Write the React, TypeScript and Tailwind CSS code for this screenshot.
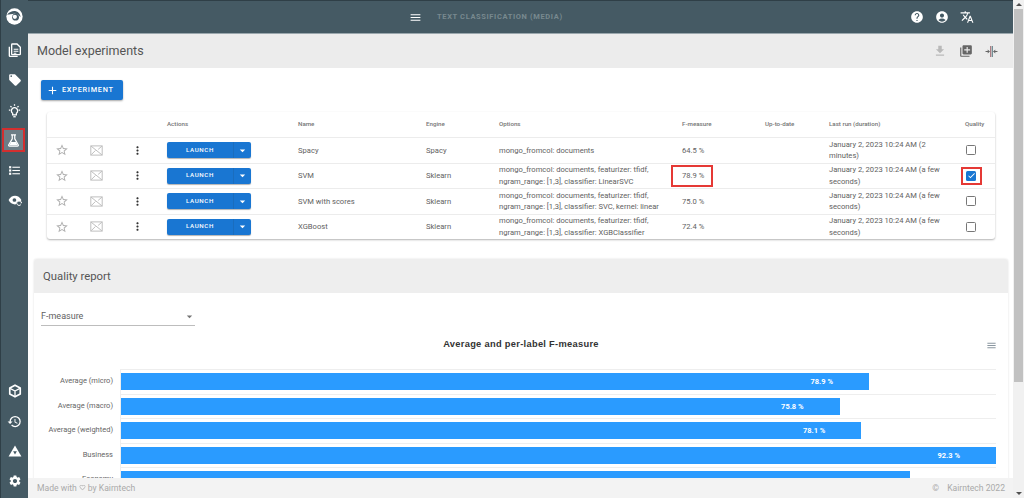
import React from "react";
import {
  MdAdd, MdArrowDropDown, MdMenu, MdHelp, MdAccountCircle, MdTranslate, MdFileDownload, MdLibraryAdd,
  MdStarBorder, MdMoreVert, MdLocalOffer, MdHistory, MdSettings, MdCheck, MdFavoriteBorder,
} from "react-icons/md";

const DocIcon = () => (
  <svg viewBox="0 0 24 24" className="w-[16px] h-[16px]" fill="none" stroke="#fff" strokeWidth="2">
    <path d="M8 3h7l5 5v10a1 1 0 0 1-1 1H8a1 1 0 0 1-1-1V4a1 1 0 0 1 1-1z" />
    <path d="M3.500 7v13.500a1 1 0 0 0 1 1H16" />
    <path d="M10 11h7M10 14h7M10 17h4" strokeWidth="1.600" />
  </svg>
);
const BulbIcon = () => (
  <svg viewBox="0 0 24 24" className="w-[15px] h-[15px]" fill="none" stroke="#fff" strokeWidth="2">
    <path d="M9 16.500a5 5 0 1 1 6 0V19H9z" />
    <path d="M10 22h4" />
    <path d="M12 2v2.500M3 11.500h2.500M18.500 11.500H21M5.500 5l1.800 1.800M18.500 5l-1.800 1.800" />
  </svg>
);
const FlaskIcon = () => (
  <svg viewBox="0 0 24 24" className="w-[15px] h-[15px]" fill="none" stroke="#fff" strokeWidth="2">
    <path d="M8 3h8" />
    <path d="M10 3v6.500L4.300 19.200A1.300 1.300 0 0 0 5.500 21h13a1.300 1.300 0 0 0 1.200-1.800L14 9.500V3" />
    <path d="M8 14.500h8l2.500 5h-13z" fill="#fff" stroke="none" />
  </svg>
);
const ListIcon = () => (
  <svg viewBox="0 0 24 24" className="w-[13px] h-[13px]" fill="#fff">
    <rect x="2" y="4" width="4" height="4" /><rect x="8" y="5" width="14" height="2" />
    <rect x="2" y="10" width="4" height="4" /><rect x="8" y="11" width="14" height="2" />
    <rect x="2" y="16" width="4" height="4" /><rect x="8" y="17" width="14" height="2" />
  </svg>
);
const EyeRefresh = () => (
  <svg viewBox="0 0 24 24" className="w-[14px] h-[14px]" fill="none">
    <path d="M1 12c2.500-5 6.500-7.500 11-7.500S20.500 7 23 12c-.5 1-1 1.700-1.600 2.500H15.500L14 19.300c-.6.1-1.300.2-2 .2-4.500 0-8.500-2.500-11-7.500z" fill="#fff" />
    <circle cx="11" cy="12" r="3.200" fill="#455a64" />
    <path d="M23 16.500a4 4 0 1 0-1 3.500" stroke="#fff" strokeWidth="1.700" />
    <path d="M23.800 14.500v3h-3z" fill="#fff" />
  </svg>
);
const CubeIcon = () => (
  <svg viewBox="0 0 24 24" className="w-[14px] h-[14px]" fill="none" stroke="#fff" strokeLinejoin="round">
    <path d="M12 2l9 5v10l-9 5-9-5V7z" strokeWidth="2.800" />
    <path d="M3.500 7.500L12 12l8.500-4.500M12 12v9.500" strokeWidth="2.200" />
  </svg>
);
const TriIcon = () => (
  <svg viewBox="0 0 24 24" className="w-[14px] h-[14px]">
    <path d="M12 2.500L23 21.500H1z" fill="#fff" />
    <path d="M8.800 12.500h6.400L12 18z" fill="#455a64" />
  </svg>
);
const Logo = () => (
  <svg viewBox="0 0 24 24" className="w-[17px] h-[17px]">
    <circle cx="12" cy="12" r="11.500" fill="#fff" />
    <path d="M1.500 9.500C5 5 10 3.500 14 4.500c4 1 6.500 4.500 6.500 8.500-2.500-3.500-5.500-5-9-4.800-3.500.2-6.500 1-10 1.300z" fill="#455a64" />
    <circle cx="13.500" cy="13" r="4.800" fill="#455a64" />
    <circle cx="12.500" cy="12.500" r="3" fill="#fff" />
  </svg>
);
const SplitIcon = () => (
  <svg viewBox="0 0 24 24" className="w-[13px] h-[13px]" fill="none">
    <path d="M10.500 2v20" stroke="#a06a70" strokeWidth="2" />
    <path d="M13.500 2v20" stroke="#5f7f88" strokeWidth="2" />
    <path d="M1 12h7M23 12h-7" stroke="#666" strokeWidth="2" />
    <path d="M5 8.500v7L9 12zM19 8.500v7L15 12z" fill="#666" />
  </svg>
);
const NoImage = () => (
  <svg viewBox="0 0 24 24" className="w-[13px] h-[13px]" fill="none" stroke="#bdbdbd" strokeWidth="1.800">
    <rect x="1.500" y="3.500" width="21" height="17" />
    <path d="M2 4l20 16M2 20l8-8M22 4l-7 6" />
  </svg>
);

const Sidebar = () => {
  const cell = "h-[30px] flex items-center justify-center";
  return (
    <aside className="w-[28px] shrink-0 bg-[#455a64] flex flex-col justify-between border-l border-[#2f3f47]">
      <div className="flex flex-col">
        <div className="h-[33px] flex items-center justify-center"><Logo /></div>
        <div className="h-[2px]" />
        <div className={cell}><DocIcon /></div>
        <div className={cell}><MdLocalOffer className="text-white text-[14px]" /></div>
        <div className={cell}><BulbIcon /></div>
        <div className="h-[24px] w-[23px] my-[3px] ml-[1px] box-border flex items-center justify-center bg-[#6c7d85] border-2 border-[#d32f2f]">
          <FlaskIcon />
        </div>
        <div className={cell}><ListIcon /></div>
        <div className={cell}><EyeRefresh /></div>
      </div>
      <div className="flex flex-col pb-[2px]">
        <div className={cell}><CubeIcon /></div>
        <div className={cell}><MdHistory className="text-white text-[15px]" /></div>
        <div className={cell}><TriIcon /></div>
        <div className={cell}><MdSettings className="text-white text-[14px]" /></div>
      </div>
    </aside>
  );
};

const TopBar = () => (
  <header className="h-[34px] shrink-0 bg-[#455a64] border-t border-[#2f3f47] border-b border-b-[#9aa7ad] flex items-center">
    <div className="ml-[381px] flex items-center">
      <MdMenu className="text-white text-[13px]" />
      <span className="ml-[15px] text-[7.500px] font-bold tracking-[0.63px] text-[#78898f]">TEXT CLASSIFICATION (MEDIA)</span>
    </div>
    <div className="ml-auto mr-[39px] flex items-center gap-[11px]">
      <MdHelp className="text-white text-[14px]" />
      <MdAccountCircle className="text-white text-[14px]" />
      <MdTranslate className="text-white text-[14px]" />
    </div>
  </header>
);

const cols = "grid grid-cols-[120px_131px_128px_73px_183px_83px_64px_136px_1fr] items-center";

type Row = { name: string; engine: string; options: string; f: string; run: string; checked?: boolean; mark?: boolean };
const rows: Row[] = [
  { name: "Spacy", engine: "Spacy", options: "mongo_fromcol: documents", f: "64.5 %", run: "January 2, 2023 10:24 AM (2 minutes)" },
  { name: "SVM", engine: "Sklearn", options: "mongo_fromcol: documents, featurizer: tfidf, ngram_range: [1,3], classifier: LinearSVC", f: "78.9 %", run: "January 2, 2023 10:24 AM (a few seconds)", checked: true, mark: true },
  { name: "SVM with scores", engine: "Sklearn", options: "mongo_fromcol: documents, featurizer: tfidf, ngram_range: [1,3], classifier: SVC, kernel: linear", f: "75.0 %", run: "January 2, 2023 10:24 AM (a few seconds)" },
  { name: "XGBoost", engine: "Sklearn", options: "mongo_fromcol: documents, featurizer: tfidf, ngram_range: [1,3], classifier: XGBClassifier", f: "72.4 %", run: "January 2, 2023 10:24 AM (a few seconds)" },
];

const ExperimentTable = () => (
  <div className="ml-[19px] mr-[18px] mt-[12px] rounded-[3px] bg-white shadow-[0_1px_2px_rgba(0,0,0,0.3)]">
    <div className={`${cols} h-[25px] text-[6.200px] font-medium text-[#757575]`}>
      <span />
      <span>Actions</span>
      <span>Name</span>
      <span>Engine</span>
      <span>Options</span>
      <span>F-measure</span>
      <span>Up-to-date</span>
      <span>Last run (duration)</span>
      <span>Quality</span>
    </div>
    {rows.map((r) => (
      <div key={r.name} className={`${cols} h-[25.500px] border-t border-[#ececec] text-[7.600px] leading-[11.300px] text-[#616161]`}>
        <div className="flex items-center">
          <MdStarBorder className="ml-[8px] text-[#b0b0b0] text-[14px]" />
          <div className="ml-[21px]"><NoImage /></div>
          <MdMoreVert className="ml-[28px] text-[#333] text-[13px]" />
        </div>
        <div className="w-[84px] h-[16px] rounded-[2px] bg-[#1976d2] shadow-[0_1px_1px_rgba(0,0,0,0.3)] flex items-center text-white">
          <span className="w-[66px] text-center text-[6.200px] font-medium tracking-[0.6px]">LAUNCH</span>
          <span className="flex-1 h-full border-l border-[#1a6dbe] flex items-center justify-center"><MdArrowDropDown className="text-[13px]" /></span>
        </div>
        <span>{r.name}</span>
        <span>{r.engine}</span>
        <span className="pr-[10px]">{r.options}</span>
        <span className="relative">
          {r.f}
          {r.mark && <span className="absolute -left-[11px] -top-[5px] w-[42px] h-[22px] border-2 border-[#e53935]" />}
        </span>
        <span />
        <span className="pr-[18px]">{r.run}</span>
        <span className="relative flex justify-start pl-[1px]">
          {r.checked ? (
            <span className="w-[10px] h-[10px] rounded-[1.500px] bg-[#1976d2] flex items-center justify-center text-white"><MdCheck className="text-[9px]" /></span>
          ) : (
            <span className="w-[10px] h-[10px] rounded-[1.500px] border-[1.500px] border-[#777] bg-white" />
          )}
          {r.mark && <span className="absolute left-[-4px] -top-[4px] w-[21px] h-[18px] border-2 border-[#e53935]" />}
        </span>
      </div>
    ))}
  </div>
);

const bars = [
  { label: "Average (micro)", v: 78.9 },
  { label: "Average (macro)", v: 75.8 },
  { label: "Average (weighted)", v: 78.1 },
  { label: "Business", v: 92.3 },
  { label: "Economy", v: 83.2 },
];

const Chart = () => (
  <div className="h-[172px] pt-[1px]">
    <div className="flex items-center h-[36px]">
      <div className="flex-1 text-center text-[9.300px] font-bold tracking-[0.3px] text-[#333] font-['Liberation_Sans',sans-serif] pl-[22px]">Average and per-label F-measure</div>
      <MdMenu className="text-[#8a97a0] text-[11px] mr-[11px]" />
    </div>
    <div className="mt-[6px] ml-[6px] mr-[12px]">
      {bars.map((b) => (
        <div key={b.label} className="flex h-[24.500px]">
          <span className="w-[80px] text-right shrink-0 pr-[7px] text-[7.500px] text-[#666] leading-[24.500px]">{b.label}</span>
          <div className="flex-1 border-t border-l border-[#eeeeee] flex items-center">
            <div
              className="h-[17px] bg-[#2a9bff] flex items-center justify-end pr-[36px] text-[7.500px] font-bold text-white"
              style={{ width: `${(b.v / 92.3) * 100}%` }}
            >
              {b.v === 83.2 ? "" : `${b.v} %`}
            </div>
          </div>
        </div>
      ))}
    </div>
  </div>
);

export default function App() {
  return (
    <div className="h-[498px] w-[1024px] overflow-hidden flex bg-white font-['Roboto',sans-serif]">
      <Sidebar />
      <div className="flex-1 min-w-0 flex flex-col">
        <TopBar />
        <main className="flex-1 min-h-0 overflow-hidden">
          <div className="h-[34px] bg-[#ececec] flex items-center pl-[9px] pr-[15px]">
            <h1 className="text-[12.500px] text-[#555]">Model experiments</h1>
            <div className="ml-auto flex items-center gap-[12px]">
              <MdFileDownload className="text-[#b9b9b9] text-[14px]" />
              <MdLibraryAdd className="text-[#666] text-[14px]" />
              <SplitIcon />
            </div>
          </div>
          <button className="ml-[13px] mt-[12px] h-[20px] w-[82px] rounded-[2px] bg-[#1976d2] shadow-[0_1px_2px_rgba(0,0,0,0.35)] flex items-center text-white pl-[5px]">
            <MdAdd className="text-[13px]" />
            <span className="ml-[3px] text-[7.300px] font-medium tracking-[0.75px]">EXPERIMENT</span>
          </button>
          <ExperimentTable />
          <section className="ml-[6px] mr-[5px] mt-[20px] bg-white rounded-t-[3px] shadow-[0_0_2px_rgba(0,0,0,0.15)]">
            <div className="h-[34px] bg-[#eeeeee] rounded-t-[3px] flex items-center pl-[9px] pt-[2px] text-[11.300px] text-[#555]">Quality report</div>
            <div className="pt-[13px]">
              <div className="ml-[7px] w-[154px] h-[20px] pt-[2px] border-b border-[#bdbdbd] flex items-center justify-between text-[9px] text-[#616161]">
                <span>F-measure</span>
                <MdArrowDropDown className="text-[#757575] text-[13px] -mr-[1px]" />
              </div>
              <Chart />
            </div>
          </section>
        </main>
        <footer className="h-[20px] shrink-0 bg-[#f3f3f3] flex items-center justify-between pl-[9px] pr-[8px] text-[8.600px] text-[#aaaaaa]">
          <span className="flex items-center gap-[2px]">Made with <MdFavoriteBorder className="text-[7px]" /> by Kairntech</span>
          <span className="flex gap-[8px]"><span>©</span><span>Kairntech 2022</span></span>
        </footer>
      </div>
      <div className="w-[11px] shrink-0 bg-[#f1f1f1] flex flex-col">
        <div className="h-[9px] flex items-center justify-center"><span className="w-0 h-0 border-x-[3px] border-x-transparent border-b-[3px] border-b-[#505050]" /></div>
        <div className="h-[373px] mx-[1px] bg-[#c1c1c1]" />
        <div className="flex-1" />
        <div className="h-[9px] flex items-center justify-center"><span className="w-0 h-0 border-x-[3px] border-x-transparent border-t-[3px] border-t-[#505050]" /></div>
      </div>
    </div>
  );
}
